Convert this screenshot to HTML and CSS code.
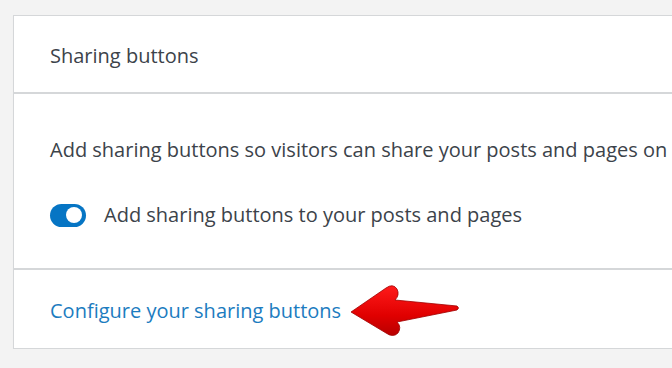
FILE: index.html
```html
<!DOCTYPE html>
<html lang="en">
<head>
    <meta charset="UTF-8">
    <meta name="viewport" content="width=device-width, initial-scale=1.0">
    <title>Sharing buttons</title>
    <link rel="stylesheet" href="styles.css">
</head>
<body>

<div class="card">
    <div class="card-header">Sharing buttons</div>
    <div class="card-body">
        <p class="intro">Add sharing buttons so visitors can share your posts and pages on <a class="accent">social networks</a></p>
        <label class="toggle-row">
            <span class="toggle"><span class="knob"></span></span>
            <span>Add sharing buttons to your posts and pages</span>
        </label>
    </div>
    <div class="card-footer">
        <a class="config-link">Configure your sharing buttons</a>
        <!-- annotation arrow -->
        <svg class="arrow" width="118" height="58" viewBox="0 0 118 58">
            <defs>
                <linearGradient id="red" x1="0" y1="0" x2="0" y2="1">
                    <stop offset="0" stop-color="#ff1a1a"/>
                    <stop offset="0.6" stop-color="#e00000"/>
                    <stop offset="1" stop-color="#b80000"/>
                </linearGradient>
            </defs>
            <path d="M4 31 L39 7 Q46 2 50 8 Q53 14 48 19 L110 25 Q113 27 110 29 L50 41 Q55 46 51 52 Q46 57 39 52 Z" fill="url(#red)" stroke="#a00000" stroke-width="0.8"/>
        </svg>
    </div>
</div>

</body>
</html>
```

FILE: styles.css
```css
body {
    margin: 0;
    background-color: #f3f3f3;
    font-family: "Open Sans", "Noto Sans", sans-serif;
    font-size: 20px;
    line-height: 28px;
    color: #3c434a;
    overflow: hidden;
}
.card {
    margin: 15px 0 0 13px;
    width: 700px;
    background-color: white;
    border: 1px solid #d5d7d9;
    box-shadow: 0 1px 1px rgba(0, 0, 0, 0.04);
}
.card-header {
    height: 78px;
    padding: 4px 0 0 36px;
    box-sizing: border-box;
    display: flex;
    align-items: center;
    border-bottom: 2px solid #d5d7d9;
}
.card-body {
    padding: 42px 0 39px 36px;
    border-bottom: 2px solid #d5d7d9;
}
.intro {
    margin: 0;
    white-space: nowrap;
}
.accent {
    color: #d68a00;
}
.toggle-row {
    display: flex;
    align-items: center;
    gap: 18px;
    margin-top: 37px;
}
.toggle {
    width: 36px;
    height: 23px;
    border-radius: 12px;
    background-color: #0675c4;
    display: flex;
    align-items: center;
    justify-content: flex-end;
    padding-right: 4px;
    box-sizing: border-box;
}
.knob {
    width: 16px;
    height: 16px;
    border-radius: 50%;
    background-color: white;
}
.card-footer {
    position: relative;
    height: 78px;
    padding: 4px 0 0 36px;
    box-sizing: border-box;
    display: flex;
    align-items: center;
}
.config-link {
    color: #1c7cc0;
    cursor: pointer;
}
.arrow {
    position: absolute;
    left: 333px;
    top: 11px;
}
```
